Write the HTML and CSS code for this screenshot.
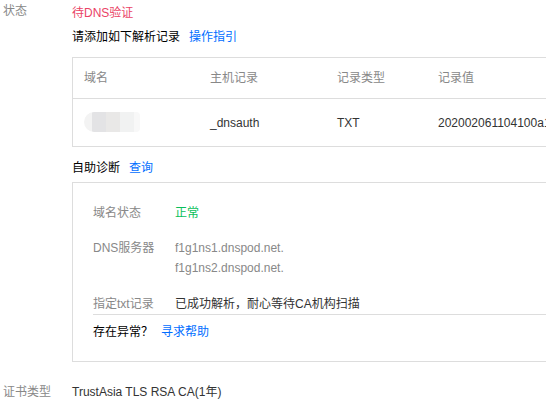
FILE: index.html
```html
<!DOCTYPE html>
<html lang="zh-CN">
<head>
<meta charset="utf-8">
<link rel="stylesheet" href="styles.css">
</head>
<body>
<div class="page">
  <div class="row">
    <div class="label label-top">状态</div>
    <div class="value">
      <div class="status-pending">待DNS验证</div>
      <div class="hint">请添加如下解析记录<a class="link">操作指引</a></div>
      <div class="table">
        <div class="tr th">
          <div class="c1">域名</div>
          <div class="c2">主机记录</div>
          <div class="c3">记录类型</div>
          <div class="c4">记录值</div>
        </div>
        <div class="tr td">
          <div class="c1"><span class="mosaic"><i class="m0"></i><i class="m1"></i><i class="m2"></i><i class="m3"></i><i class="m4"></i></span></div>
          <div class="c2">_dnsauth</div>
          <div class="c3">TXT</div>
          <div class="c4">202002061104100a1f3e9c6b2d7a48e5</div>
        </div>
      </div>
      <div class="diag-title">自助诊断<a class="link">查询</a></div>
      <div class="diag">
        <div class="drow first">
          <div class="dlabel">域名状态</div>
          <div class="dval ok">正常</div>
        </div>
        <div class="drow second">
          <div class="dlabel">DNS服务器</div>
          <div class="dval ns">f1g1ns1.dnspod.net.<br>f1g1ns2.dnspod.net.</div>
        </div>
        <div class="drow third">
          <div class="dlabel">指定txt记录</div>
          <div class="dval dark">已成功解析，耐心等待CA机构扫描</div>
        </div>
        <div class="help">存在异常？<a class="link">寻求帮助</a></div>
      </div>
    </div>
  </div>
  <div class="row cert">
    <div class="label">证书类型</div>
    <div class="value cert-val">TrustAsia TLS RSA CA(1年)</div>
  </div>
</div>
</body>
</html>
```

FILE: styles.css
```css
html, body {
  margin: 0;
  padding: 0;
  background: #fff;
  overflow: hidden;
}
body {
  font-family: "Liberation Sans", Arial, "Noto Sans CJK SC", sans-serif;
  font-size: 12px;
  color: #000;
}
.page {
  width: 700px;
  padding: 3px 0 0 3px;
}
.row {
  display: flex;
}
.label {
  width: 69px;
  flex: none;
  color: #888;
  line-height: 20px;
}
.label-top {
  line-height: 17px;
}
.value {
  flex: 1;
  line-height: 20px;
}
.status-pending {
  color: #ea4366;
}
.hint {
  margin-top: 4px;
  color: #000;
}
.link {
  color: #006eff;
  margin-left: 9px;
  text-decoration: none;
}
.table {
  margin-top: 10px;
  width: 620px;
  border: 1px solid #ddd;
  border-right: none;
}
.tr {
  display: flex;
  align-items: center;
}
.th {
  height: 40px;
  color: #888;
  border-bottom: 1px solid #ddd;
}
.td {
  height: 47px;
  color: #333;
}
.tr > div {
  padding-left: 11px;
  box-sizing: border-box;
  white-space: nowrap;
}
.c1 { width: 126px; flex: none; }
.c2 { width: 127px; flex: none; }
.c3 { width: 101px; flex: none; }
.c4 { flex: 1; }
.mosaic {
  display: inline-flex;
  height: 20px;
  vertical-align: middle;
  border-radius: 10px 4px 4px 10px;
  overflow: hidden;
  margin-top: -2px;
}
.mosaic i {
  display: block;
  height: 20px;
}
.m0 { width: 8px; background: #f3f3f3; }
.m1 { width: 14px; background: #e3e3e5; }
.m2 { width: 14px; background: #e9e8e7; }
.m3 { width: 14px; background: #f1f2f2; }
.m4 { width: 6px; background: #f8f8f8; }
.diag-title {
  margin-top: 11px;
  color: #000;
}
.diag {
  margin-top: 4px;
  width: 620px;
  border: 1px solid #ddd;
  border-right: none;
  padding: 20px 0 19px 20px;
}
.drow {
  display: flex;
}
.second { margin-top: 15px; }
.third {
  margin-top: 16px;
  border-bottom: 1px solid #ddd;
}
.dlabel {
  width: 82px;
  flex: none;
  color: #888;
}
.dval { color: #888; }
.ok { color: #0abf5b; }
.ns { color: #888; }
.dark { color: #333; }
.help {
  margin-top: 7px;
  color: #000;
}
.help .link {
  margin-left: 8px;
}
.cert {
  margin-top: 20px;
}
.cert-val {
  color: #333;
}
```
